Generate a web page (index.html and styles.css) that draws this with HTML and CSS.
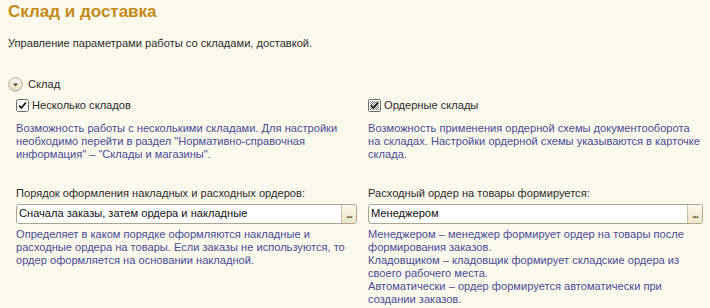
FILE: index.html
```html
<!DOCTYPE html>
<html lang="ru">
<head>
  <meta charset="UTF-8">
  <title>Склад и доставка</title>
  <link rel="stylesheet" href="styles.css">
</head>
<body>
  <h1 class="title">Склад и доставка</h1>
  <p class="subtitle">Управление параметрами работы со складами, доставкой.</p>

  <div class="group-head">
    <svg class="toggle" width="15" height="15" viewBox="0 0 15 15">
      <defs>
        <linearGradient id="tg" x1="0" y1="0" x2="0" y2="1">
          <stop offset="0" stop-color="#fdfbf3"/>
          <stop offset="1" stop-color="#e4dcc0"/>
        </linearGradient>
      </defs>
      <circle cx="7.5" cy="7.5" r="6.8" fill="url(#tg)" stroke="#b3ab93"/>
      <path d="M5 6.5h5l-2.5 3z" fill="#5a4a20"/>
    </svg>
    <span>Склад</span>
  </div>

  <div class="grid">
    <div class="col">
      <label class="check">
        <svg width="13" height="13" viewBox="0 0 13 13">
          <rect x="0.5" y="0.5" width="12" height="12" rx="2" fill="#fff" stroke="#6f6a5c"/>
          <path d="M3 6.5l2.3 2.5 4.7-5.5" fill="none" stroke="#1a1a1a" stroke-width="1.8"/>
        </svg>
        <span>Несколько складов</span>
      </label>
      <p class="hint">Возможность работы с несколькими складами. Для настройки необходимо перейти в раздел "Нормативно-справочная информация" – "Склады и магазины".</p>
    </div>
    <div class="col">
      <label class="check">
        <svg width="13" height="13" viewBox="0 0 13 13">
          <defs>
            <pattern id="dots" width="2" height="2" patternUnits="userSpaceOnUse">
              <rect width="1" height="1" fill="#777"/>
              <rect x="1" y="1" width="1" height="1" fill="#777"/>
            </pattern>
          </defs>
          <rect x="0.5" y="0.5" width="12" height="12" rx="1" fill="#fff" stroke="#6f6a5c"/>
          <rect x="2" y="2" width="9" height="9" fill="url(#dots)"/>
          <path d="M3 6.5l2.3 2.5 4.7-5.5" fill="none" stroke="#1a1a1a" stroke-width="1.8"/>
        </svg>
        <span>Ордерные склады</span>
      </label>
      <p class="hint">Возможность применения ордерной схемы документооборота на складах. Настройки ордерной схемы указываются в карточке склада.</p>
    </div>

    <div class="col field">
      <div class="field-label">Порядок оформления накладных и расходных ордеров:</div>
      <div class="input">
        <span class="value">Сначала заказы, затем ордера и накладные</span>
        <span class="btn">...</span>
      </div>
      <p class="hint">Определяет в каком порядке оформляются накладные и расходные ордера на товары. Если заказы не используются, то ордер оформляется на основании накладной.</p>
    </div>
    <div class="col field">
      <div class="field-label">Расходный ордер на товары формируется:</div>
      <div class="input">
        <span class="value">Менеджером</span>
        <span class="btn">...</span>
      </div>
      <p class="hint">Менеджером – менеджер формирует ордер на товары после формирования заказов.<br>Кладовщиком – кладовщик формирует складские ордера из своего рабочего места.<br>Автоматически – ордер формируется автоматически при создании заказов.</p>
    </div>
  </div>
</body>
</html>
```

FILE: styles.css
```css
body {
  margin: 0;
  padding: 0 7px 0 8px;
  background: #fbf9ec;
  font-family: 'Liberation Sans', Arial, sans-serif;
  font-size: 11.1px;
  color: #2b2b2b;
}
.title {
  margin: 1px 0 0;
  font-size: 17px;
  line-height: 22px;
  font-weight: bold;
  color: #c58a17;
}
.subtitle {
  margin: 13px 0 0;
  line-height: 14px;
}
.group-head {
  display: flex;
  align-items: center;
  gap: 5px;
  margin-top: 27px;
  line-height: 15px;
}
.grid {
  display: grid;
  grid-template-columns: 341px 335px;
  column-gap: 11px;
  padding-left: 8px;
  margin-top: 5px;
}
.check {
  display: flex;
  align-items: center;
  gap: 3px;
  height: 16px;
  line-height: 16px;
}
.hint {
  margin: 0;
  color: #4a4a98;
  line-height: 13px;
}
.check + .hint {
  margin-top: 9px;
}
.field {
  margin-top: 25px;
}
.field-label {
  line-height: 14px;
}
.input {
  display: flex;
  height: 18px;
  margin-top: 4px;
  border: 1px solid #aaa58c;
  border-radius: 3px;
  background: #fff;
  overflow: hidden;
}
.value {
  flex: 1;
  padding-left: 2px;
  line-height: 17px;
  color: #111;
}
.btn {
  width: 14px;
  border-left: 1px solid #c9c3a6;
  background: linear-gradient(#fbf8ea, #ece5c8);
  color: #5a4a20;
  font-weight: bold;
  font-size: 10px;
  line-height: 20px;
  text-align: center;
  letter-spacing: -1px;
}
.input + .hint {
  margin-top: 4px;
}
```
